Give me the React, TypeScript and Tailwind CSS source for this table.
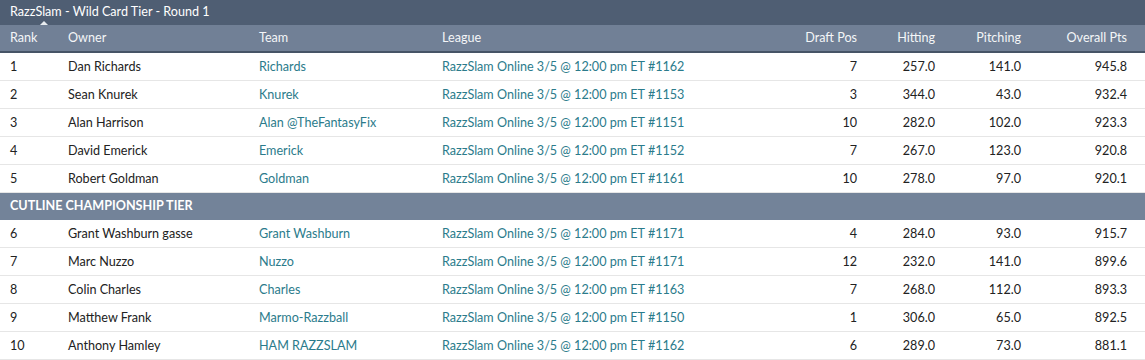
import React from "react";

type Row = {
  rank: number;
  owner: string;
  team: string;
  league: string;
  draft: number;
  hitting: string;
  pitching: string;
  overall: string;
};

const wildCard: Row[] = [
  { rank: 1, owner: "Dan Richards", team: "Richards", league: "RazzSlam Online 3/5 @ 12:00 pm ET #1162", draft: 7, hitting: "257.0", pitching: "141.0", overall: "945.8" },
  { rank: 2, owner: "Sean Knurek", team: "Knurek", league: "RazzSlam Online 3/5 @ 12:00 pm ET #1153", draft: 3, hitting: "344.0", pitching: "43.0", overall: "932.4" },
  { rank: 3, owner: "Alan Harrison", team: "Alan @TheFantasyFix", league: "RazzSlam Online 3/5 @ 12:00 pm ET #1151", draft: 10, hitting: "282.0", pitching: "102.0", overall: "923.3" },
  { rank: 4, owner: "David Emerick", team: "Emerick", league: "RazzSlam Online 3/5 @ 12:00 pm ET #1152", draft: 7, hitting: "267.0", pitching: "123.0", overall: "920.8" },
  { rank: 5, owner: "Robert Goldman", team: "Goldman", league: "RazzSlam Online 3/5 @ 12:00 pm ET #1161", draft: 10, hitting: "278.0", pitching: "97.0", overall: "920.1" },
];

const cutline: Row[] = [
  { rank: 6, owner: "Grant Washburn gasse", team: "Grant Washburn", league: "RazzSlam Online 3/5 @ 12:00 pm ET #1171", draft: 4, hitting: "284.0", pitching: "93.0", overall: "915.7" },
  { rank: 7, owner: "Marc Nuzzo", team: "Nuzzo", league: "RazzSlam Online 3/5 @ 12:00 pm ET #1171", draft: 12, hitting: "232.0", pitching: "141.0", overall: "899.6" },
  { rank: 8, owner: "Colin Charles", team: "Charles", league: "RazzSlam Online 3/5 @ 12:00 pm ET #1163", draft: 7, hitting: "268.0", pitching: "112.0", overall: "893.3" },
  { rank: 9, owner: "Matthew Frank", team: "Marmo-Razzball", league: "RazzSlam Online 3/5 @ 12:00 pm ET #1150", draft: 1, hitting: "306.0", pitching: "65.0", overall: "892.5" },
  { rank: 10, owner: "Anthony Hamley", team: "HAM RAZZSLAM", league: "RazzSlam Online 3/5 @ 12:00 pm ET #1162", draft: 6, hitting: "289.0", pitching: "73.0", overall: "881.1" },
];

const cols = "grid grid-cols-[58px_191px_183px_335px_100px_78px_86px_114px]";

const StandingRow = ({ row }: { row: Row }) => (
  <div className={`${cols} h-[28px] items-center border-b border-[#e6e6e6] pt-[1px] text-[#222]`}>
    <div className="pl-[10px]">{row.rank}</div>
    <div className="pl-[10px]">{row.owner}</div>
    <div className="pl-[10px]">
      <a className="text-[#2b7b8b]">{row.team}</a>
    </div>
    <div className="pl-[10px]">
      <a className="text-[#2b7b8b]">{row.league}</a>
    </div>
    <div className="pr-[10px] text-right">{row.draft}</div>
    <div className="pr-[10px] text-right">{row.hitting}</div>
    <div className="pr-[10px] text-right">{row.pitching}</div>
    <div className="pr-[18px] text-right">{row.overall}</div>
  </div>
);

export default function App() {
  return (
    <div className="w-[1145px] h-[360px] overflow-hidden bg-white font-['Lato',sans-serif] text-[12.6px]">
      <div className="relative flex h-[25px] items-center bg-[#4f5e73] pl-[10px] text-white">
        RazzSlam - Wild Card Tier - Round 1
        <span className="absolute bottom-0 left-[40px] h-0 w-0 border-x-[4px] border-b-[4px] border-x-transparent border-b-[#e8ecf0]" />
      </div>
      <div className={`${cols} h-[28px] items-center border-b-2 border-[#465466] bg-[#718096] text-[#f4f6f8]`}>
        <div className="pl-[10px]">Rank</div>
        <div className="pl-[10px]">Owner</div>
        <div className="pl-[10px]">Team</div>
        <div className="pl-[10px]">League</div>
        <div className="pr-[10px] text-right">Draft Pos</div>
        <div className="pr-[10px] text-right">Hitting</div>
        <div className="pr-[10px] text-right">Pitching</div>
        <div className="pr-[18px] text-right">Overall Pts</div>
      </div>
      {wildCard.map((r) => (
        <StandingRow key={r.rank} row={r} />
      ))}
      <div className="flex h-[27px] items-center bg-[#738399] pl-[10px] font-bold uppercase text-white">
        Cutline Championship Tier
      </div>
      {cutline.map((r) => (
        <StandingRow key={r.rank} row={r} />
      ))}
    </div>
  );
}
